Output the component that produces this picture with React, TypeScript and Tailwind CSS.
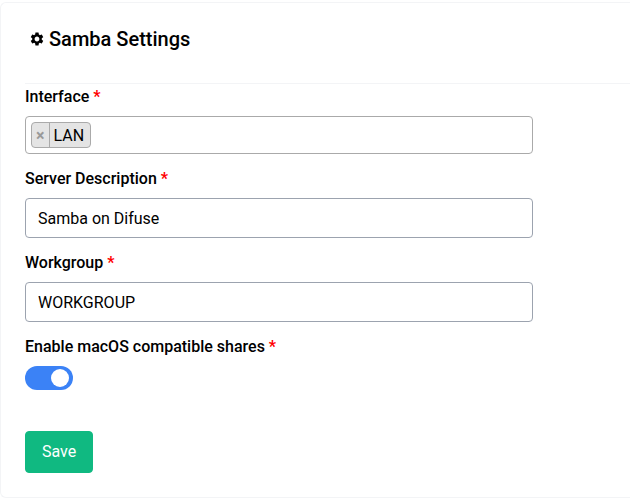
import { useState } from "react";
import type { ReactNode } from "react";
import { MdSettings } from "react-icons/md";

function FieldLabel({ htmlFor, children }: { htmlFor: string; children: ReactNode }) {
  return (
    <label htmlFor={htmlFor} className="self-start font-medium">
      {children} <span className="font-bold text-[#ff0000]">*</span>
    </label>
  );
}

function TextField({ id, label, initial }: { id: string; label: string; initial: string }) {
  const [value, setValue] = useState(initial);
  return (
    <div className="flex flex-col gap-[7px]">
      <FieldLabel htmlFor={id}>{label}</FieldLabel>
      <input
        id={id}
        type="text"
        value={value}
        onChange={(e) => setValue(e.target.value)}
        className="h-10 w-full rounded border border-[#9ca3af] bg-white px-3"
      />
    </div>
  );
}

function InterfaceField() {
  const [tags, setTags] = useState(["LAN"]);
  return (
    <div className="flex flex-col gap-[7px]">
      <FieldLabel htmlFor="interface">Interface</FieldLabel>
      <div className="flex h-[38px] items-center gap-1 rounded border border-[#aaaaaa] bg-white px-[5px]">
        {tags.map((tag) => (
          <span
            key={tag}
            className="flex h-[26px] items-stretch overflow-hidden rounded border border-[#aaaaaa] bg-[#e4e4e4] leading-[26px]"
          >
            <button
              type="button"
              aria-label={`Remove ${tag}`}
              onClick={() => setTags(tags.filter((t) => t !== tag))}
              className="border-r border-[#aaaaaa] px-1 font-bold text-[#999999]"
            >
              ×
            </button>
            <span className="pr-[6px] pl-1">{tag}</span>
          </span>
        ))}
        <input id="interface" type="text" className="min-w-0 flex-1 bg-transparent outline-none" />
      </div>
    </div>
  );
}

export default function App() {
  const [enabled, setEnabled] = useState(true);
  return (
    <main className="bg-white pt-[2px] font-[Roboto,sans-serif] text-base text-black">
      <section className="rounded-l-md border-y border-l border-[#f3f4f6] pb-6 pl-6">
        <header className="mb-px flex h-[81px] items-start border-b border-[#f3f4f6] pt-[22px] pl-1">
          <h1 className="flex items-center gap-1 text-xl leading-7 font-medium">
            <MdSettings className="size-4" />
            Samba Settings
          </h1>
        </header>
        <form className="max-w-[508px]" onSubmit={(e) => e.preventDefault()}>
          <div className="flex flex-col gap-[13px]">
            <InterfaceField />
            <TextField id="description" label="Server Description" initial="Samba on Difuse" />
            <TextField id="workgroup" label="Workgroup" initial="WORKGROUP" />
            <div className="flex flex-col gap-[7px]">
              <FieldLabel htmlFor="macos">Enable macOS compatible shares</FieldLabel>
              <input
                id="macos"
                type="checkbox"
                checked={enabled}
                onChange={(e) => setEnabled(e.target.checked)}
                className="flex h-6 w-12 appearance-none items-center rounded-full bg-gray-300 px-1 before:size-[18px] before:rounded-full before:bg-white checked:justify-end checked:bg-[#3b82f6]"
              />
            </div>
          </div>
          <button
            type="submit"
            className="mt-[41px] h-[42px] rounded-sm border border-[#10b981] bg-[#10b981] px-4 text-white"
          >
            Save
          </button>
        </form>
      </section>
    </main>
  );
}
